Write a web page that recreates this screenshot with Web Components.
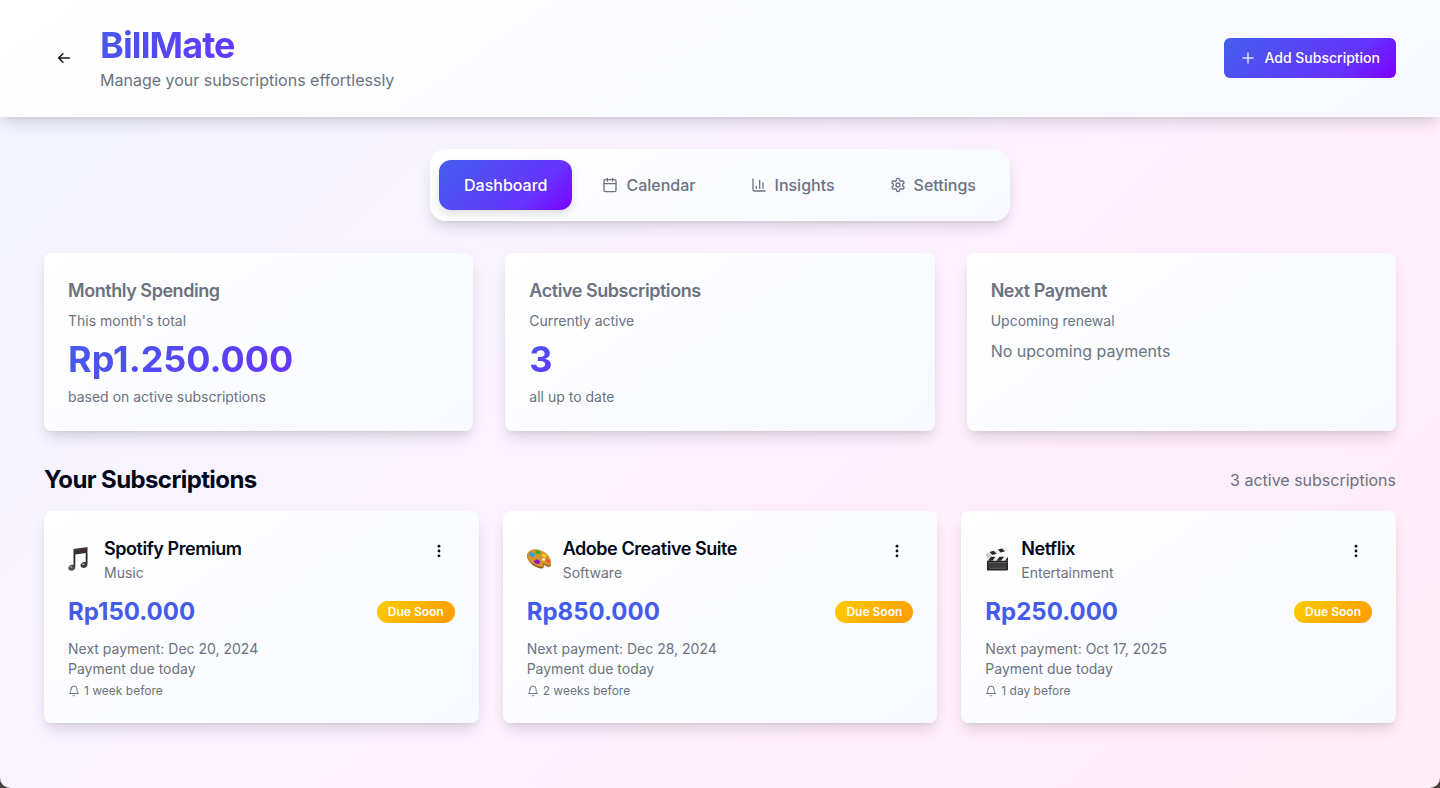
<!DOCTYPE html>
<html lang="en">
<head>
<meta charset="utf-8">
<title>BillMate</title>
<style>
  :root {
    --ink: #020817;
    --muted: #6b7280;
    --brand: #455bea;
    --brand-gradient: linear-gradient(135deg, #435fec 0%, #6633ff 70%, #7b00ff 100%);
    --text-gradient: linear-gradient(135deg, #455cea, #6633ff);
    --surface: linear-gradient(145deg, #ffffff 0%, #f7f9ff 100%);
    --shadow: 0 10px 15px -3px rgba(0,0,0,.1), 0 4px 6px -4px rgba(0,0,0,.1), 0 4px 20px -2px rgba(0,0,0,.04);
  }
  body { margin: 0; background: #45423f; font: 16px/24px Inter, sans-serif; color: var(--ink); }
</style>
</head>
<body>
<bill-app></bill-app>

<script>
const define = (name, html, setup) => {
  const template = document.createElement('template');
  template.innerHTML = html;
  customElements.define(name, class extends HTMLElement {
    constructor() {
      super();
      this.attachShadow({ mode: 'open' }).append(template.content.cloneNode(true));
    }
    connectedCallback() { if (setup) setup(this, this.shadowRoot); }
  });
};

const line = (body, extra = '') => `<svg viewBox="0 0 24 24" fill="none" stroke="currentColor" stroke-width="2" stroke-linecap="round" stroke-linejoin="round" ${extra}>${body}</svg>`;
const radix = (d, weight = 0) => `<svg viewBox="0 0 15 15" fill="currentColor" stroke="currentColor" stroke-width="${weight}"><path fill-rule="evenodd" clip-rule="evenodd" d="${d}"/></svg>`;

const ICONS = {
  back: radix('M6.854 3.146a.5.5 0 0 1 0 .708L3.707 7H12.5a.5.5 0 0 1 0 1H3.707l3.147 3.146a.5.5 0 0 1-.708.708l-4-4a.5.5 0 0 1 0-.708l4-4a.5.5 0 0 1 .708 0Z', 0.4),
  plus: radix('M8 2.75a.5.5 0 0 0-1 0V7H2.75a.5.5 0 0 0 0 1H7v4.25a.5.5 0 0 0 1 0V8h4.25a.5.5 0 0 0 0-1H8V2.75Z', 0.2),
  dots: '<svg viewBox="0 0 15 15" fill="currentColor"><circle cx="7.5" cy="3" r="1.3"/><circle cx="7.5" cy="7.5" r="1.3"/><circle cx="7.5" cy="12" r="1.3"/></svg>',
  calendar: line('<path d="M8 2v4M16 2v4M3 10h18"/><rect x="3" y="4" width="18" height="18" rx="2"/>'),
  chart: line('<path d="M3 3v16a2 2 0 0 0 2 2h16M18 17V9M13 17V5M8 17v-3"/>'),
  gear: line('<path d="M12.22 2h-.44a2 2 0 0 0-2 2v.18a2 2 0 0 1-1 1.73l-.43.25a2 2 0 0 1-2 0l-.15-.08a2 2 0 0 0-2.73.73l-.22.38a2 2 0 0 0 .73 2.73l.15.1a2 2 0 0 1 1 1.72v.51a2 2 0 0 1-1 1.74l-.15.09a2 2 0 0 0-.73 2.73l.22.38a2 2 0 0 0 2.73.73l.15-.08a2 2 0 0 1 2 0l.43.25a2 2 0 0 1 1 1.73V20a2 2 0 0 0 2 2h.44a2 2 0 0 0 2-2v-.18a2 2 0 0 1 1-1.73l.43-.25a2 2 0 0 1 2 0l.15.08a2 2 0 0 0 2.73-.73l.22-.39a2 2 0 0 0-.73-2.73l-.15-.08a2 2 0 0 1-1-1.74v-.5a2 2 0 0 1 1-1.74l.15-.09a2 2 0 0 0 .73-2.73l-.22-.38a2 2 0 0 0-2.73-.73l-.15.08a2 2 0 0 1-2 0l-.43-.25a2 2 0 0 1-1-1.73V4a2 2 0 0 0-2-2z"/><circle cx="12" cy="12" r="3"/>'),
  bell: line('<path d="M6 8a6 6 0 0 1 12 0c0 7 3 9 3 9H3s3-2 3-9M10.3 21a1.94 1.94 0 0 0 3.4 0"/>'),
  music: `<svg viewBox="0 0 24 28"><defs><linearGradient id="n" x1="0" y1="0" x2="0" y2="1"><stop offset="0" stop-color="#4a3434"/><stop offset=".5" stop-color="#222"/><stop offset="1" stop-color="#4c565c"/></linearGradient></defs><path fill="url(#n)" d="M5.5 4 19.500 2v17.500c0 2.200-1.600 3.500-3.800 3.500-1.900 0-3.200-1-3.200-2.700 0-2 1.900-3.300 4.200-3.300l1 .1V8L7.300 9.500V22c0 2.300-1.600 3.700-3.800 3.700C1.600 25.700.3 24.700.3 23c0-2 1.900-3.300 4.200-3.300l1 .1Z"/><ellipse cx="3" cy="22" rx="1.700" ry=".8" fill="#a7b0b5"/><ellipse cx="15.300" cy="19.300" rx="1.700" ry=".8" fill="#a7b0b5"/></svg>`,
  palette: `<svg viewBox="0 0 24 28"><path fill="#8c5b16" d="M4.500 5.500C9 3.500 17 6 21 11c3 4 4 8 2.500 10-1.300 1.600-3.500 1-5-.5-1-1-2.200-.8-1.800.7.4 1.900-1.700 2.800-4.200 2C7 22-.2 16.500.1 10.500.2 8 2 6.500 4.500 5.500Z"/><path fill="#d8922b" d="M4.500 4.900C9 2.900 17 5.400 21 10.400c3 4 4 7.700 2.500 9.400-1.300 1.300-3.500.8-5-.7s-3-1.200-2.400.6c.6 1.800-1.200 2.600-3.600 1.900C7 20-.2 15.900.1 9.900c.1-2.500 1.900-4 4.400-5Z"/><ellipse cx="5.300" cy="9.500" rx="3" ry="2" fill="#2d9fe6" transform="rotate(25 5 9)"/><ellipse cx="11" cy="7.300" rx="2.600" ry="1.700" fill="#25b52a" transform="rotate(15 11 7)"/><ellipse cx="17.500" cy="10.500" rx="2.300" ry="1.700" fill="#f2d32c" transform="rotate(30 17 10)"/><ellipse cx="21" cy="16" rx="2" ry="1.600" fill="#ee5037" transform="rotate(40 21 16)"/><ellipse cx="10" cy="16.800" rx="3" ry="2.100" fill="#8a17c6" transform="rotate(20 10 17)"/><ellipse cx="16.500" cy="14.500" rx="1.600" ry="1.200" fill="#f5f0e8"/></svg>`,
  clapper: `<svg viewBox="0 0 24 28"><rect x="2" y="13" width="21" height="12.500" rx="1" fill="#252628"/><rect x="3.500" y="18" width="18" height="5" fill="#3b3c3e"/><path fill="#ececec" d="M2 11.800h21v4H2zM.4 8.200 22 1.800l1 3.600L2 11.800Z"/><path fill="#252628" d="m4.500 7 4.200-1.200 3 3-4.300 1.300Zm8.300-2.400L17 3.400l3 2.900-4.200 1.300ZM6 11.800h4.500l-3 4H3Zm8.500 0H19l-3 4h-4.500Zm8.500 0v4h-3Z"/><circle cx="3.300" cy="10.500" r="2.300" fill="#c9c9c9"/><path stroke="#777" stroke-width=".7" d="M3 17.500h19.500M4 23.300h17"/></svg>`
};

/* <ui-icon name>: one drawing from the set above; small is 12px, large is 24px. */
define('ui-icon', `<style>
  :host { display: inline-flex; flex: none; width: 16px; }
  :host([small]) { width: 12px; }
  :host([large]) { width: 24px; }
  svg { display: block; width: 100%; }
</style>`, (host, root) => {
  if (!root.querySelector('svg')) root.append(document.createRange().createContextualFragment(ICONS[host.getAttribute('name')]));
});

define('app-header', `<style>
  :host { display: block; background: var(--surface); box-shadow: var(--shadow); }
  .bar { max-width: 1352px; margin: 0 auto; padding: 22px 24px 24px; display: flex; align-items: center; gap: 16px; }
  .titles { flex: 1; }
  h1 { margin: 0; width: fit-content; font-size: 36px; line-height: 46px; font-weight: 700; letter-spacing: -0.025em;
       background: var(--text-gradient); -webkit-background-clip: text; background-clip: text; color: transparent; }
  p { margin: 0 0 1px; color: var(--muted); }
  button { font: inherit; border: 0; border-radius: 6px; height: 40px; display: flex; align-items: center; justify-content: center; }
  .back { width: 40px; padding: 0; background: none; color: inherit; }
  .add { gap: 8px; padding: 0 16px; font-size: 14px; font-weight: 500; color: #fff; background: var(--brand-gradient); }
</style>
<header class="bar">
  <button class="back" aria-label="Back"><ui-icon name="back"></ui-icon></button>
  <div class="titles"><h1>BillMate</h1><p>Manage your subscriptions effortlessly</p></div>
  <button class="add"><ui-icon name="plus"></ui-icon>Add Subscription</button>
</header>`);

define('nav-tab', `<style>
  :host { display: block; }
  button { display: flex; align-items: center; gap: 8px; height: 50px; padding: 0 25px; border: 0; border-radius: 12px;
           font: inherit; font-weight: 500; color: var(--muted); background: none; }
  :host([active]) button { color: #fff; background: var(--brand-gradient); box-shadow: 0 4px 8px rgba(0,0,0,.12); }
</style>
<button role="tab"><slot name="icon"></slot><slot></slot></button>`, (host, root) => {
  root.querySelector('button').setAttribute('aria-selected', host.hasAttribute('active'));
});

define('nav-tabs', `<style>
  :host { display: flex; gap: 5px; box-sizing: border-box; width: fit-content; margin: 0 auto; padding: 11px 9px;
          border-radius: 16px; background: var(--surface); box-shadow: var(--shadow); }
</style><slot></slot>`);

define('stat-card', `<style>
  :host { display: block; padding: 24px; border-radius: 8px; background: var(--surface); box-shadow: var(--shadow); color: var(--muted); }
  h3 { margin: 0 0 6px; font-size: 18px; line-height: 28px; font-weight: 600; letter-spacing: -0.025em; }
  .sub, ::slotted([slot=note]) { display: block; font-size: 14px; line-height: 20px; }
  ::slotted([slot=amount]) { display: block; width: fit-content; margin: 8px 0; font-size: 36px; line-height: 40px; font-weight: 700;
    background: var(--text-gradient); -webkit-background-clip: text; background-clip: text; color: transparent; }
  ::slotted([slot=message]) { display: block; margin-top: 8px; }
</style>
<h3><slot name="title"></slot></h3>
<div class="sub"><slot name="subtitle"></slot></div>
<slot name="amount"></slot><slot name="message"></slot><slot name="note"></slot>`);

define('subscription-card', `<style>
  :host { display: block; padding: 24px; border-radius: 8px; background: var(--surface); box-shadow: var(--shadow); color: var(--muted);
          font-size: 14px; line-height: 20px; }
  .top { display: flex; align-items: center; gap: 12px; height: 48px; }
  .name { flex: 1; }
  h3 { margin: 0; font-size: 18px; line-height: 28px; font-weight: 600; letter-spacing: -0.025em; color: var(--ink); }
  button { align-self: flex-start; width: 32px; height: 32px; padding: 0; border: 0; background: none; color: var(--ink);
           display: flex; align-items: center; justify-content: center; }
  .price { display: flex; align-items: center; justify-content: space-between; margin: 12px 0 10px; }
  .amount { font-size: 24px; line-height: 34px; font-weight: 700; color: var(--brand); }
  .badge { padding: 3px 11px; border-radius: 11px; font-size: 12px; line-height: 16px; font-weight: 600; color: #fff;
           background: linear-gradient(135deg, #ffcc00, #ff9900); }
  .remind { display: flex; align-items: center; gap: 4px; margin-top: 4px; font-size: 12px; line-height: 16px; }
</style>
<div class="top">
  <slot name="icon"></slot>
  <div class="name"><h3><slot name="name"></slot></h3><slot name="category"></slot></div>
  <button aria-label="More options"><ui-icon name="dots"></ui-icon></button>
</div>
<div class="price"><span class="amount"><slot name="amount"></slot></span><span class="badge">Due Soon</span></div>
<div>Next payment: <slot name="date"></slot></div>
<div>Payment due today</div>
<div class="remind"><ui-icon name="bell" small></ui-icon><slot name="reminder"></slot></div>`);

define('bill-app', `<style>
  :host { display: flex; flex-direction: column; min-height: 100vh; border-radius: 0 0 10px 10px; overflow: hidden;
          background: linear-gradient(135deg, #f1f4ff 0%, #f9f3ff 35%, #fff0ff 58%, #ffedf7 100%); }
  main { box-sizing: border-box; width: 100%; max-width: 1400px; margin: 0 auto; padding: 32px 24px; }
  .stats, .subs { display: grid; grid-template-columns: repeat(3, minmax(0, 1fr)); }
  .stats { gap: 32px; margin: 32px 0; }
  .subs { gap: 24px; }
  .heading { display: flex; align-items: center; justify-content: space-between; margin-bottom: 14px; }
  h2 { margin: 0; font-size: 24px; line-height: 34px; font-weight: 700; letter-spacing: -0.025em; }
  .heading span { color: var(--muted); }
</style>
<app-header></app-header>
<main>
  <nav-tabs role="tablist">
    <nav-tab active>Dashboard</nav-tab>
    <nav-tab><ui-icon slot="icon" name="calendar"></ui-icon>Calendar</nav-tab>
    <nav-tab><ui-icon slot="icon" name="chart"></ui-icon>Insights</nav-tab>
    <nav-tab><ui-icon slot="icon" name="gear"></ui-icon>Settings</nav-tab>
  </nav-tabs>
  <section class="stats">
    <stat-card><span slot="title">Monthly Spending</span><span slot="subtitle">This month's total</span><span slot="amount">Rp1.250.000</span><span slot="note">based on active subscriptions</span></stat-card>
    <stat-card><span slot="title">Active Subscriptions</span><span slot="subtitle">Currently active</span><span slot="amount">3</span><span slot="note">all up to date</span></stat-card>
    <stat-card><span slot="title">Next Payment</span><span slot="subtitle">Upcoming renewal</span><span slot="message">No upcoming payments</span></stat-card>
  </section>
  <div class="heading"><h2>Your Subscriptions</h2><span>3 active subscriptions</span></div>
  <section class="subs">
    <subscription-card><ui-icon slot="icon" name="music" large></ui-icon><span slot="name">Spotify Premium</span><span slot="category">Music</span><span slot="amount">Rp150.000</span><span slot="date">Dec 20, 2024</span><span slot="reminder">1 week before</span></subscription-card>
    <subscription-card><ui-icon slot="icon" name="palette" large></ui-icon><span slot="name">Adobe Creative Suite</span><span slot="category">Software</span><span slot="amount">Rp850.000</span><span slot="date">Dec 28, 2024</span><span slot="reminder">2 weeks before</span></subscription-card>
    <subscription-card><ui-icon slot="icon" name="clapper" large></ui-icon><span slot="name">Netflix</span><span slot="category">Entertainment</span><span slot="amount">Rp250.000</span><span slot="date">Oct 17, 2025</span><span slot="reminder">1 day before</span></subscription-card>
  </section>
</main>`);
</script>
</body>
</html>
